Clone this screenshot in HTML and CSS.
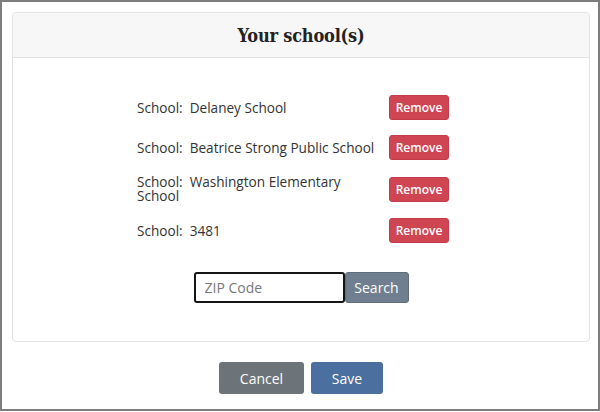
FILE: index.html
```html
<!DOCTYPE html>
<html>
<head>
<meta charset="utf-8">
<link rel="stylesheet" href="styles.css">
</head>
<body>
<div class="frame">
  <div class="card">
    <div class="card-header"><h1 class="title">Your school(s)</h1></div>
    <div class="card-body">
      <div class="school-list">
        <div class="school-row">
          <div class="school-text">School:<span class="school-name">Delaney School</span></div>
          <button class="btn btn-remove">Remove</button>
        </div>
        <div class="school-row">
          <div class="school-text">School:<span class="school-name">Beatrice Strong Public School</span></div>
          <button class="btn btn-remove">Remove</button>
        </div>
        <div class="school-row">
          <div class="school-text">School:<span class="school-name">Washington Elementary School</span></div>
          <button class="btn btn-remove">Remove</button>
        </div>
        <div class="school-row">
          <div class="school-text">School:<span class="school-name">3481</span></div>
          <button class="btn btn-remove">Remove</button>
        </div>
      </div>
      <div class="search-group">
        <input class="zip-input" type="text" placeholder="ZIP Code">
        <button class="btn btn-search">Search</button>
      </div>
    </div>
  </div>
  <div class="actions">
    <button class="btn btn-cancel">Cancel</button>
    <button class="btn btn-save">Save</button>
  </div>
</div>
</body>
</html>
```
FILE: styles.css
```css
* { box-sizing: border-box; }
html, body { margin: 0; padding: 0; background: #fff; }
body { font-family: "Open Sans", "Liberation Sans", sans-serif; color: #333; }

.frame {
  width: 600px;
  height: 411px;
  border: 2px solid #7d7d7d;
  padding: 10px 8px 0 10px;
}

.card {
  border: 1px solid #e3e3e3;
  border-radius: 4px;
  background: #fff;
}

.card-header {
  background: #f7f7f7;
  border-bottom: 1px solid #e3e3e3;
  border-radius: 4px 4px 0 0;
  height: 45px;
  display: flex;
  align-items: center;
  justify-content: center;
}

.title {
  margin: 0;
  font-family: "DejaVu Serif Condensed", "DejaVu Serif", serif;
  font-weight: bold;
  font-size: 18px;
  color: #222;
  letter-spacing: -0.2px;
}

.card-body {
  padding: 37px 0 38px;
  display: flex;
  flex-direction: column;
  align-items: center;
}

.school-list {
  width: 328px;
  padding-right: 16px;
  display: flex;
  flex-direction: column;
  gap: 15px;
}

.school-row {
  display: grid;
  grid-template-columns: 1fr 60px;
  align-items: center;
  min-height: 25px;
}

.school-text {
  font-size: 13.6px;
  line-height: 14px;
  color: #333;
  padding-right: 10px;
}

.school-name { margin-left: 7px; }

.btn {
  font-family: "Open Sans", "Liberation Sans", sans-serif;
  border: none;
  color: #fff;
  border-radius: 3px;
  padding: 0;
  cursor: pointer;
}

.btn-remove {
  width: 60px;
  height: 25px;
  background: #d04552;
  font-size: 12px;
  font-weight: 600;
  border: 1px solid #c23d49;
}

.search-group {
  margin-top: 29px;
  display: flex;
}

.zip-input {
  width: 151px;
  height: 31px;
  border: 2px solid #151515;
  border-radius: 3px;
  padding: 0 9px;
  font-family: "Open Sans", "Liberation Sans", sans-serif;
  font-size: 14px;
  color: #333;
  outline: none;
}
.zip-input::placeholder { color: #777; }

.btn-search {
  width: 64px;
  height: 31px;
  background: #6f7f8f;
  border: 1px solid #5f6d7a;
  font-size: 14px;
}

.actions {
  margin-top: 20px;
  display: flex;
  justify-content: center;
  gap: 7px;
}

.btn-cancel {
  width: 85px;
  height: 32px;
  background: #6d7479;
  font-size: 14px;
}

.btn-save {
  width: 72px;
  height: 32px;
  background: #4b6f9f;
  font-size: 14px;
}
```
